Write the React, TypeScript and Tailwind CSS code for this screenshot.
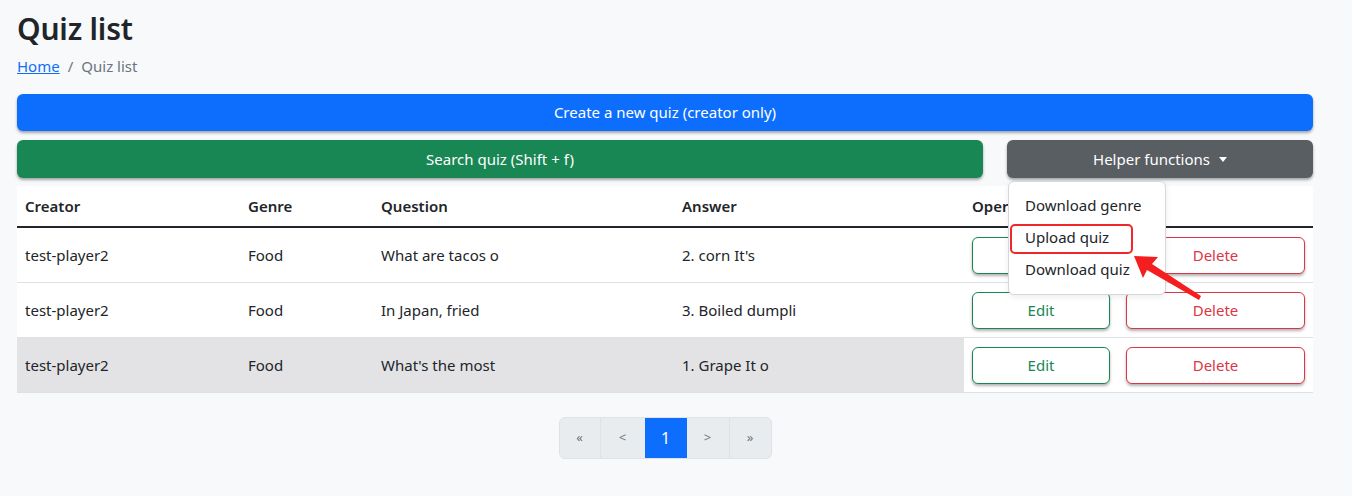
import React from "react";

const rows = [
  { c: "test-player2", g: "Food", q: "What are tacos o", a: "2. corn It's", hl: false },
  { c: "test-player2", g: "Food", q: "In Japan, fried", a: "3. Boiled dumpli", hl: false },
  { c: "test-player2", g: "Food", q: "What's the most", a: "1. Grape It o", hl: true },
];

export default function App() {
  return (
    <div
      className="relative w-[1352px] h-[496px] bg-[#f8f9fb] text-[#212529] overflow-hidden"
      style={{ fontFamily: '"Noto Sans", "Open Sans", sans-serif' }}
    >
      <div className="px-[17px] w-[1330px]">
        <h1 className="pt-[9px] text-[30px] leading-[40px] font-semibold tracking-[-0.2px]">Quiz list</h1>
        <nav className="mt-[7px] flex items-center text-[15px] leading-[20px]">
          <a className="text-[#0d6efd] underline">Home</a>
          <span className="px-[8px] text-[#6c757d]">/</span>
          <span className="text-[#6c757d]">Quiz list</span>
        </nav>
        <button className="mt-[18px] w-full h-[37px] rounded-[6px] bg-[#0d6efd] text-white text-[15px] shadow-[0_2px_3px_rgba(0,0,0,0.35)]">
          Create a new quiz (creator only)
        </button>
        <div className="mt-[9px] flex gap-[24px]">
          <button className="w-[966px] h-[38px] rounded-[6px] bg-[#198754] text-white text-[15px] shadow-[0_2px_3px_rgba(0,0,0,0.35)]">
            Search quiz (Shift + f)
          </button>
          <div className="relative w-[306px]">
            <button className="w-full h-[38px] rounded-[6px] bg-[#595e63] text-white text-[15px] flex items-center justify-center shadow-[0_2px_3px_rgba(0,0,0,0.35)]">
              Helper functions
              <span className="ml-[9px] inline-block w-0 h-0 border-l-[4px] border-r-[4px] border-t-[5px] border-l-transparent border-r-transparent border-t-white" />
            </button>
          </div>
        </div>
        <div className="mt-[8px] w-[1296px] bg-white text-[15px]">
          <div className="flex h-[42px] items-center border-b-2 border-[#212529] font-semibold">
            <div className="w-[223px] px-[8px]">Creator</div>
            <div className="w-[133px] px-[8px]">Genre</div>
            <div className="w-[301px] px-[8px]">Question</div>
            <div className="w-[290px] px-[8px]">Answer</div>
            <div className="w-[349px] px-[8px]">Operations</div>
          </div>
          {rows.map((r, i) => (
            <div key={i} className="flex h-[55px] border-b border-[#dee2e6]">
              <div className={`flex w-[947px] items-center ${r.hl ? "bg-[#e3e3e5]" : ""}`}>
                <div className="w-[223px] px-[8px]">{r.c}</div>
                <div className="w-[133px] px-[8px]">{r.g}</div>
                <div className="w-[301px] px-[8px]">{r.q}</div>
                <div className="w-[290px] px-[8px]">{r.a}</div>
              </div>
              <div className="w-[349px] px-[8px] flex items-center gap-[16px]">
                <button className="w-[138px] h-[37px] rounded-[6px] border border-[#198754] text-[#198754] bg-white shadow-[0_2px_3px_rgba(0,0,0,0.3)]">
                  Edit
                </button>
                <button className="w-[179px] h-[37px] rounded-[6px] border border-[#dc3545] text-[#dc3545] bg-white shadow-[0_2px_3px_rgba(0,0,0,0.3)]">
                  Delete
                </button>
              </div>
            </div>
          ))}
        </div>
        <div className="mt-[24px] flex justify-center">
          <div className="flex h-[42px] rounded-[6px] border border-[#dee2e6] overflow-hidden bg-[#e9ecef] text-[#6c757d] text-[13px]">
            <div className="w-[41px] flex items-center justify-center border-r border-[#dee2e6]">«</div>
            <div className="w-[44px] flex items-center justify-center">&lt;</div>
            <div className="w-[42px] flex items-center justify-center bg-[#0d6efd] text-white text-[16px]">1</div>
            <div className="w-[43px] flex items-center justify-center border-r border-[#dee2e6]">&gt;</div>
            <div className="w-[41px] flex items-center justify-center">»</div>
          </div>
        </div>
      </div>

      {/* Dropdown menu */}
      <div className="absolute left-[1008px] top-[181px] w-[158px] pt-[7px] pb-[9px] bg-white border border-[#d5d7da] rounded-[6px] shadow-[0_2px_6px_rgba(0,0,0,0.08)] text-[15px]">
        <div className="h-[32px] px-[16px] flex items-center">Download genre</div>
        <div className="h-[32px] px-[16px] flex items-center">Upload quiz</div>
        <div className="h-[32px] px-[16px] flex items-center">Download quiz</div>
      </div>
      {/* highlight box */}
      <div className="absolute left-[1010px] top-[224px] w-[123px] h-[30px] rounded-[5px] border-2 border-[#f0262a]" />
      {/* arrow */}
      <svg className="absolute left-0 top-0" width="1352" height="496" viewBox="0 0 1352 496">
        <polygon points="1134,256 1158,257 1152,264 1201,296 1199,300 1147,270 1143,278" fill="#f51e1e" />
      </svg>
    </div>
  );
}
